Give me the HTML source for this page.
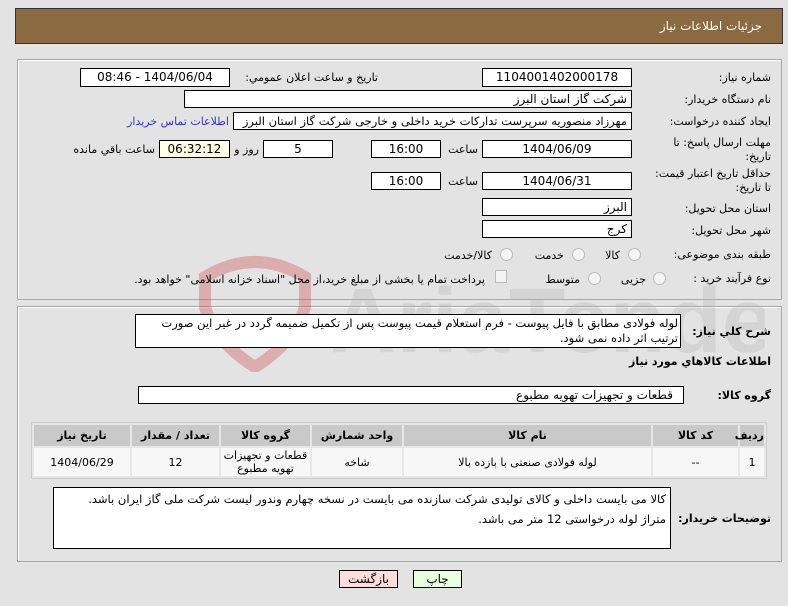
<!DOCTYPE html>
<html><head><meta charset="utf-8"><style>
body{margin:0;width:788px;height:606px;background:#e3e3e3;font-family:"DejaVu Sans",sans-serif;font-size:11px;color:#000;position:relative;overflow:hidden;direction:rtl}
.a{position:absolute;white-space:nowrap}
.l{position:absolute;white-space:nowrap;right:17px;text-align:right;line-height:14px}
.b{position:absolute;background:#fff;border:1px solid #000;box-sizing:border-box;text-align:center;font-size:12px;line-height:16px;overflow:hidden;white-space:nowrap}
.r{text-align:right;padding-right:4px}
.p{position:absolute;border:1px solid #a8a8a8;box-shadow:inset 1px 1px 0 #fff}
.rad{position:absolute;width:11px;height:11px;border:1px solid #bbb;border-radius:50%;background:#f4f4f4}
table{position:absolute;border-collapse:separate;border-spacing:2px;background:#e6e6e6;border:1px solid #ccc;font-size:11px;table-layout:fixed}
th{background:#c9c9c9;height:21px;font-weight:bold;padding:0}
td{background:#f7f7f7;text-align:center;height:28px;padding:0;line-height:13px}
</style></head><body>
<div class="a" style="left:15px;top:8px;width:768px;height:36px;background:#8b6a41;border:1px solid #333;box-sizing:border-box"></div>
<div class="a" style="right:26px;top:19px;color:#fff;font-size:12px">جزئیات اطلاعات نیاز</div>
<div class="p" style="left:17px;top:59px;width:763px;height:239px"></div>
<div class="p" style="left:17px;top:306px;width:763px;height:254px"></div>
<svg class="a" style="left:195px;top:252px;opacity:.3;direction:ltr" width="570" height="120" viewBox="0 0 570 120"><path d="M10 25 Q60 -5 110 25 L110 55 Q100 90 60 115 Q20 90 10 55Z" fill="none" stroke="#c33" stroke-width="12"/><text x="135" y="100" font-size="92" font-weight="bold" fill="#b5b5b5" font-family="Liberation Sans">AriaTender.net</text></svg>

<div class="l" style="top:71px">شماره نیاز:</div>
<div class="b" style="left:482px;top:68px;width:150px;height:19px">1104001402000178</div>
<div class="a" style="right:410px;top:71px">تاریخ و ساعت اعلان عمومي:</div>
<div class="b" style="left:80px;top:68px;width:150px;height:19px">1404/06/04 - 08:46</div>

<div class="l" style="top:93px">نام دستگاه خریدار:</div>
<div class="b r" style="left:184px;top:90px;width:448px;height:18px">شرکت گاز استان البرز</div>

<div class="l" style="top:115px">ایجاد کننده درخواست:</div>
<div class="b r" style="left:233px;top:112px;width:399px;height:18px;font-size:11.5px">مهرزاد منصوریه سرپرست تدارکات خرید داخلی و خارجی شرکت گاز استان البرز</div>
<div class="a" style="right:559px;top:115px;color:#33c">اطلاعات تماس خریدار</div>

<div class="l" style="top:136px">مهلت ارسال پاسخ: تا<br>تاریخ:</div>
<div class="b" style="left:482px;top:140px;width:150px;height:18px">1404/06/09</div>
<div class="a" style="right:310px;top:143px">ساعت</div>
<div class="b" style="left:371px;top:140px;width:70px;height:18px">16:00</div>
<div class="b" style="left:263px;top:140px;width:70px;height:18px">5</div>
<div class="a" style="right:529px;top:143px">روز و</div>
<div class="b" style="left:159px;top:140px;width:71px;height:18px;background:#ffffe6">06:32:12</div>
<div class="a" style="right:633px;top:143px">ساعت باقي مانده</div>

<div class="l" style="top:167px">حداقل تاریخ اعتبار قیمت:<br>تا تاریخ:</div>
<div class="b" style="left:482px;top:172px;width:150px;height:18px">1404/06/31</div>
<div class="a" style="right:310px;top:175px">ساعت</div>
<div class="b" style="left:371px;top:172px;width:70px;height:18px">16:00</div>

<div class="l" style="top:202px">استان محل تحویل:</div>
<div class="b r" style="left:482px;top:198px;width:150px;height:18px">البرز</div>
<div class="l" style="top:224px">شهر محل تحویل:</div>
<div class="b r" style="left:482px;top:220px;width:150px;height:18px">کرج</div>

<div class="l" style="top:248px">طبقه بندی موضوعی:</div>
<div class="rad" style="left:628px;top:248px"></div><div class="a" style="right:168px;top:249px">کالا</div>
<div class="rad" style="left:572px;top:248px"></div><div class="a" style="right:224px;top:249px">خدمت</div>
<div class="rad" style="left:500px;top:248px"></div><div class="a" style="right:296px;top:249px">کالا/خدمت</div>

<div class="l" style="top:272px">نوع فرآیند خرید :</div>
<div class="rad" style="left:653px;top:272px"></div><div class="a" style="right:142px;top:273px">جزیی</div>
<div class="rad" style="left:588px;top:272px"></div><div class="a" style="right:208px;top:273px">متوسط</div>
<div class="a" style="left:495px;top:270px;width:10px;height:11px;border:1px solid #bbb;background:#f4f4f4"></div>
<div class="a" style="right:303px;top:273px">پرداخت تمام یا بخشی از مبلغ خرید،از محل "اسناد خزانه اسلامی" خواهد بود.</div>

<div class="l" style="top:325px;font-weight:bold">شرح کلي نیاز:</div>
<div class="b" style="left:135px;top:314px;width:546px;height:34px;text-align:right;padding:1px 2px;white-space:normal;line-height:15px;font-size:11.5px">لوله فولادی مطابق با فایل پیوست - فرم استعلام قیمت پیوست پس از تکمیل ضمیمه گردد در غیر این صورت ترتیب اثر داده نمی شود.</div>
<div class="l" style="top:355px;font-weight:bold">اطلاعات کالاهاي مورد نیاز</div>
<div class="l" style="top:389px;font-weight:bold">گروه کالا:</div>
<div class="b r" style="left:138px;top:386px;width:546px;height:18px;padding-right:10px">قطعات و تجهیزات تهویه مطبوع</div>

<table style="left:31px;top:422px;width:736px">
<tr><th style="width:24px">ردیف</th><th style="width:85px">کد کالا</th><th style="width:247px">نام کالا</th><th style="width:90px">واحد شمارش</th><th style="width:89px">گروه کالا</th><th style="width:87px">تعداد / مقدار</th><th>تاریخ نیاز</th></tr>
<tr><td>1</td><td>--</td><td>لوله فولادی صنعتی با بازده بالا</td><td>شاخه</td><td>قطعات و تجهیزات<br>تهویه مطبوع</td><td>12</td><td>1404/06/29</td></tr>
</table>

<div class="l" style="top:512px;font-weight:bold">توضیحات خریدار:</div>
<div class="b" style="left:53px;top:487px;width:618px;height:62px;text-align:right;padding:1px 4px;white-space:normal;line-height:20px;font-size:11.5px">کالا می بایست داخلی و کالای تولیدی شرکت سازنده می بایست در نسخه چهارم وندور لیست شرکت ملی گاز ایران باشد.<br>متراژ لوله درخواستی 12 متر می باشد.</div>

<div class="b" style="left:339px;top:570px;width:59px;height:18px;background:#fdd">بازگشت</div>
<div class="b" style="left:413px;top:570px;width:49px;height:18px;background:#e8ffe0">چاپ</div>
</body></html>
